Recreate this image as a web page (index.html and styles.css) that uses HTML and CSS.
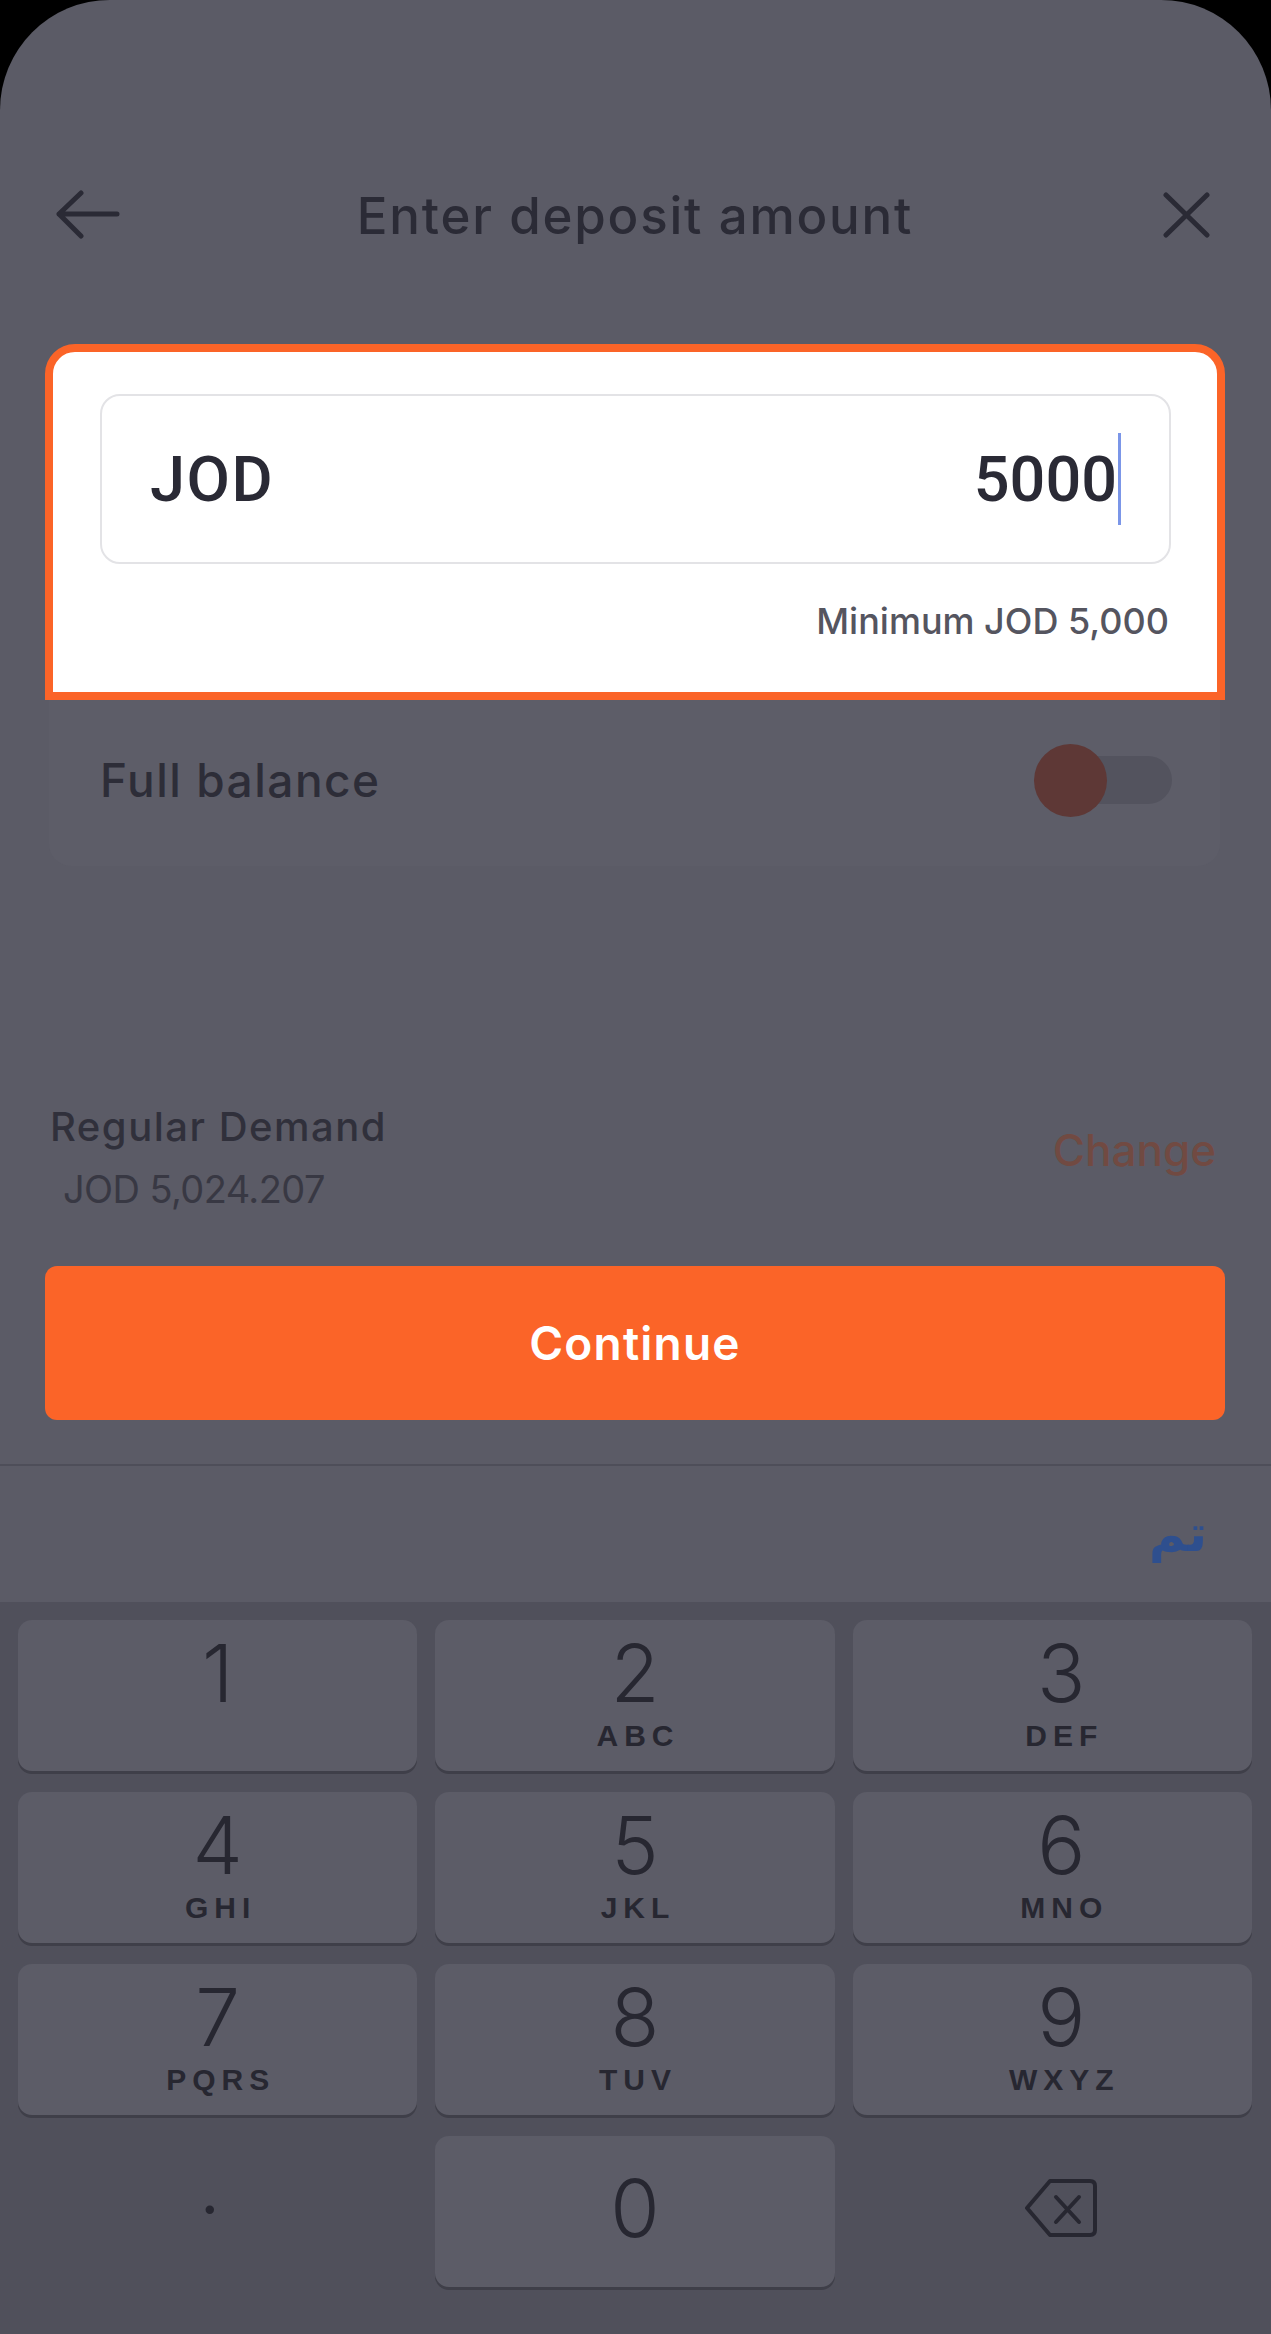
FILE: index.html
```html
<!DOCTYPE html>
<html lang="en">
<head>
  <meta charset="UTF-8" />
  <meta name="viewport" content="width=device-width, initial-scale=1.0"/>
  <title>Enter deposit amount</title>
  <link rel="stylesheet" href="styles.css">
</head>
<body>
  <div class="screen">

    <!-- Top bar -->
    <header class="topbar">
      <div class="icon-slot">
        <svg class="icon" width="66" height="50" viewBox="0 0 66 50" aria-label="Back">
          <path d="M62 24 H4 M26 3 L4 24 L26 46" />
        </svg>
      </div>
      <h1 class="title">Enter deposit amount</h1>
      <div class="icon-slot right">
        <svg class="icon" width="48" height="48" viewBox="0 0 48 48" aria-label="Close">
          <path d="M4 4 L45 44 M45 4 L4 44" />
        </svg>
      </div>
    </header>

    <!-- Amount card (highlighted part + dimmed part) -->
    <section class="amount-card">
      <div class="amount-focus">
        <div class="amount-input">
          <span class="currency">JOD</span>
          <span class="value">5000<span class="caret"></span></span>
        </div>
        <p class="hint">Minimum JOD 5,000</p>
      </div>
      <div class="balance-row">
        <span class="balance-label">Full balance</span>
        <span class="toggle">
          <span class="track"></span>
          <span class="knob"></span>
        </span>
      </div>
    </section>

    <!-- Source account -->
    <div class="account">
      <div>
        <div class="account-name">Regular Demand</div>
        <div class="account-balance">JOD 5,024.207</div>
      </div>
      <a class="change-link" href="#">Change</a>
    </div>

    <button class="continue" type="button">Continue</button>

    <!-- Keyboard accessory bar -->
    <div class="accessory">
      <span class="done" lang="ar">تم</span>
    </div>

    <!-- Number pad -->
    <div class="keypad">
      <div class="key"><span class="digit">1</span></div>
      <div class="key"><span class="digit">2</span><span class="letters">ABC</span></div>
      <div class="key"><span class="digit">3</span><span class="letters">DEF</span></div>
      <div class="key"><span class="digit">4</span><span class="letters">GHI</span></div>
      <div class="key"><span class="digit">5</span><span class="letters">JKL</span></div>
      <div class="key"><span class="digit">6</span><span class="letters">MNO</span></div>
      <div class="key"><span class="digit">7</span><span class="letters">PQRS</span></div>
      <div class="key"><span class="digit">8</span><span class="letters">TUV</span></div>
      <div class="key"><span class="digit">9</span><span class="letters">WXYZ</span></div>
      <div class="key flat dot"><span class="digit">.</span></div>
      <div class="key centered"><span class="digit">0</span></div>
      <div class="key flat centered">
        <svg class="icon delete" width="72" height="60" viewBox="0 0 72 60" aria-label="Delete">
          <path d="M2 30 L25 3 H65 Q70 3 70 8 V52 Q70 57 65 57 H25 Z" />
          <path d="M31 19 L54 44 M54 19 L31 44" />
        </svg>
      </div>
    </div>

  </div>
</body>
</html>
```

FILE: styles.css
```css
body {
  margin: 0;
  background: #000;
  font-family: Inter, "Noto Sans", Arial, sans-serif;
}
.screen {
  width: 1271px;
  height: 2334px;
  background: #5b5b66;
  border-radius: 110px 110px 0 0;
  overflow: hidden;
  display: flex;
  flex-direction: column;
}

/* top bar */
.topbar {
  height: 295px;
  box-sizing: border-box;
  padding: 135px 61px 0 55px;
  display: flex;
  align-items: center;
}
.icon-slot {
  width: 75px;
  display: flex;
}
.icon-slot.right {
  width: 70px;
  justify-content: flex-end;
}
.icon {
  fill: none;
  stroke: #2a2a35;
  stroke-width: 5;
  stroke-linecap: round;
  stroke-linejoin: round;
}
.title {
  flex: 1;
  margin: 0;
  text-align: center;
  font-size: 51px;
  font-weight: 500;
  letter-spacing: 1.8px;
  color: #2b2b36;
}

/* amount card */
.amount-card {
  margin: 49px 46px 0 45px;
}
.amount-focus {
  height: 356px;
  box-sizing: border-box;
  border: 8px solid #fb6428;
  border-radius: 30px 30px 0 0;
  background: #fff;
  padding: 42px 46px 0 47px;
}
.amount-input {
  height: 170px;
  box-sizing: border-box;
  border: 2px solid #e3e3e6;
  border-radius: 20px;
  padding: 0 48px;
  display: flex;
  align-items: center;
  justify-content: space-between;
  font-family: Roboto, "Liberation Sans", Arial, sans-serif;
  font-size: 63px;
  font-weight: 500;
  color: #2a2a35;
}
.currency {
  letter-spacing: 1.5px;
}
.value {
  display: flex;
  align-items: center;
}
.caret {
  width: 3px;
  height: 92px;
  margin-left: 1px;
  background: #7b96e8;
}
.hint {
  margin: 35px 2px 0 0;
  text-align: right;
  font-size: 36px;
  line-height: 44px;
  font-weight: 500;
  color: #55555f;
}
.balance-row {
  height: 166px;
  box-sizing: border-box;
  margin: 0 5px 0 4px;
  padding: 0 48px 6px 51px;
  background: #5d5d68;
  border-radius: 0 0 22px 22px;
  display: flex;
  align-items: center;
  justify-content: space-between;
}
.balance-label {
  font-size: 46px;
  font-weight: 500;
  letter-spacing: 1.5px;
  color: #2d2d38;
}
.toggle {
  position: relative;
  width: 138px;
  height: 73px;
  display: flex;
  align-items: center;
}
.track {
  width: 112px;
  height: 48px;
  margin-left: 26px;
  border-radius: 24px;
  background: #53535e;
}
.knob {
  position: absolute;
  left: 0;
  top: 0;
  width: 73px;
  height: 73px;
  border-radius: 50%;
  background: #5e3836;
}

/* account */
.account {
  margin: 237px 55px 0 50px;
  display: flex;
  justify-content: space-between;
  align-items: flex-start;
}
.account-name {
  font-size: 40px;
  line-height: 48px;
  font-weight: 500;
  letter-spacing: 1.5px;
  color: #30303b;
}
.account-balance {
  margin-top: 15px;
  padding-left: 13px;
  font-size: 38px;
  line-height: 46px;
  letter-spacing: -0.6px;
  color: #383843;
}
.change-link {
  margin-top: 21px;
  font-size: 44px;
  line-height: 52px;
  font-weight: 500;
  color: #714a42;
  text-decoration: none;
}

/* continue */
.continue {
  margin: 54px 46px 0 45px;
  height: 154px;
  border: none;
  border-radius: 12px;
  background: #fb6428;
  color: #fff;
  font-family: inherit;
  font-size: 46px;
  font-weight: 600;
  letter-spacing: 1.2px;
}

/* keyboard */
.accessory {
  margin-top: 44px;
  height: 138px;
  box-sizing: border-box;
  border-top: 2px solid #4e4e59;
  padding-right: 64px;
  display: flex;
  align-items: center;
  justify-content: flex-end;
}
.done {
  font-family: "DejaVu Sans", sans-serif;
  font-size: 50px;
  font-weight: bold;
  color: #2e4f8e;
}
.keypad {
  flex: 1;
  background: #50505b;
  padding: 18px 19px 0 18px;
  display: grid;
  grid-template-columns: repeat(3, 1fr);
  grid-auto-rows: 151px;
  column-gap: 18px;
  row-gap: 21px;
  align-content: start;
}
.key {
  background: #5c5c67;
  border-radius: 14px;
  box-shadow: 0 3px 0 #3f3f49;
  padding-top: 14px;
  box-sizing: border-box;
  display: flex;
  flex-direction: column;
  align-items: center;
  color: #272731;
}
.key:nth-child(3n) {
  padding-left: 18px;
}
.key.flat {
  background: none;
  box-shadow: none;
}
.key.centered {
  padding-top: 0;
  padding-bottom: 8px;
  justify-content: center;
}
.key.dot {
  padding: 0 16px 54px 0;
  justify-content: center;
}
.digit {
  font-size: 80px;
  line-height: 78px;
  font-weight: 300;
}
.letters {
  margin-top: 9px;
  padding-left: 6px;
  font-family: "Liberation Sans", Arial, sans-serif;
  font-size: 30px;
  line-height: 30px;
  font-weight: bold;
  letter-spacing: 6px;
}
.delete {
  stroke: #272731;
  stroke-width: 4;
}
```
